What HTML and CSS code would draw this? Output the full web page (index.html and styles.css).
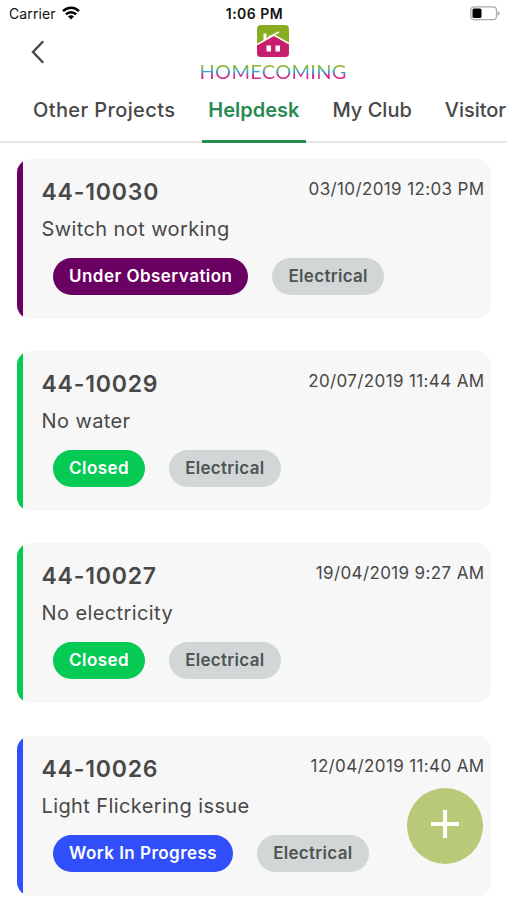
FILE: index.html
```html
<!DOCTYPE html>
<html lang="en">
<head>
<meta charset="utf-8">
<title>Helpdesk</title>
<link rel="stylesheet" href="styles.css">
</head>
<body>
<div class="status">
  <div class="carrier"><span>Carrier</span>
    <svg width="18" height="14" viewBox="0 0 18 14" fill="none" stroke="#000" stroke-width="2.5"><path d="M1 5.2C5.4.6 12.6.6 17 5.2M3.900 8.400c2.900-2.900 7.300-2.900 10.200 0"/><path d="M9 13.500 6 10.600c1.700-1.700 4.300-1.700 6 0z" fill="#000" stroke="none"/></svg>
  </div>
  <div class="clock">1:06 PM</div>
  <svg class="battery" width="30" height="15" viewBox="0 0 30 15"><rect x=".8" y=".8" width="25.7" height="12.9" rx="3.5" fill="#fff" stroke="#aaa" stroke-width="1.3"/><rect x="2.5" y="2.6" width="9" height="9.3" rx="1.5"/><path d="M27.700 5v4.600q2-.7 2-2.300t-2-2.300" fill="#aaa"/></svg>
</div>
<header class="header">
  <svg class="back" width="14" height="24" viewBox="0 0 14 24" fill="none" stroke="#484848" stroke-width="2.4"><path d="M12.200 1.200 2 12l10.200 10.800"/></svg>
  <div class="brand">
    <svg width="32" height="32" viewBox="0 0 32 32"><rect width="32" height="32" rx="4" fill="#88ad20"/><path d="M0 20 17 11l15 8.500V28q0 4-4 4H4q-4 0-4-4z" fill="#c81e70"/><path d="m0 19.500 17-9.500 15 8.500M11 12.500 22 7" fill="none" stroke="#fff" stroke-width="1.500"/><path d="M6.500 8.500h3V14l-3 1.500zM9.500 20.500h4.500v6H9.500zm9 0H23v6h-4.500z" fill="#fff"/></svg>
    <div class="wordmark">HOMECOMING</div>
  </div>
</header>
<nav class="tabs">
  <a class="tab projects">Other Projects</a>
  <a class="tab active">Helpdesk</a>
  <a class="tab">My Club</a>
  <a class="tab visitor">Visitor</a>
</nav>
<main class="list">
  <article class="card observed">
    <div class="top"><h2>44-10030</h2><time>03/10/2019 12:03 PM</time></div>
    <p>Switch not working</p>
    <div class="chips"><span class="chip state">Under Observation</span><span class="chip kind">Electrical</span></div>
  </article>
  <article class="card closed">
    <div class="top"><h2>44-10029</h2><time>20/07/2019 11:44 AM</time></div>
    <p>No water</p>
    <div class="chips"><span class="chip state">Closed</span><span class="chip kind">Electrical</span></div>
  </article>
  <article class="card closed">
    <div class="top"><h2>44-10027</h2><time>19/04/2019 9:27 AM</time></div>
    <p>No electricity</p>
    <div class="chips"><span class="chip state">Closed</span><span class="chip kind">Electrical</span></div>
  </article>
  <article class="card progress">
    <div class="top"><h2>44-10026</h2><time>12/04/2019 11:40 AM</time></div>
    <p>Light Flickering issue</p>
    <div class="chips"><span class="chip state">Work In Progress</span><span class="chip kind">Electrical</span></div>
  </article>
</main>
<button class="add" aria-label="Add"><svg width="28" height="28" viewBox="0 0 28 28"><path d="M14 0v28M0 14h28" stroke="#fff" stroke-width="4"/></svg></button>
</body>
</html>
```
FILE: styles.css
```css
* { box-sizing: border-box; }
body { margin: 0; width: 507px; height: 900px; overflow: hidden; background: #fff; color: #484848; font-family: Inter, "Liberation Sans", sans-serif; }
svg { display: block; flex: none; }
.status { display: grid; grid-template-columns: 1fr auto 1fr; height: 24px; padding: 6px 7px 0 9px; color: #111; font-size: 14px; line-height: 16px; }
.carrier { display: flex; gap: 6px; letter-spacing: .1px; }
.clock { font-weight: 600; letter-spacing: .5px; }
.battery { justify-self: end; }
.header { display: grid; grid-template-columns: 1fr auto 1fr; height: 64px; padding: 1px 0 0; }
.back { margin: 15px 0 0 31px; }
.brand { display: flex; flex-direction: column; align-items: center; width: 148px; margin-left: 38px; }
.wordmark { width: 150px; margin-top: 3px; padding-left: 2px; font: 20px/22px Lato, sans-serif; letter-spacing: .3px; white-space: nowrap; color: transparent; background: linear-gradient(#8fb52a 30%, #55b5a0 45%, #3a9bd8 55%, #d52b86 70%); background-clip: text; }
.tabs { display: flex; gap: 20px; height: 55px; padding-left: 27px; border-bottom: 2px solid #e7e6e3; }
.tab { flex: none; height: 55px; padding: 10px 7px 0 6px; font-size: 20px; line-height: 24px; font-weight: 500; white-space: nowrap; }
.projects { letter-spacing: .38px; }
.visitor { padding-right: 0; letter-spacing: -.05px; }
.tab.active { color: #278a50; font-weight: 600; border-bottom: 3px solid #278a50; }
.list { display: grid; gap: 32.2px; padding: 16px 16px 0 17px; }
.card { height: 160px; padding: 19px 6.5px 0 24.5px; border-radius: 14px; background: linear-gradient(90deg, var(--state) 6px, #f7f7f7 6.5px); }
.observed { --state: #6b0063; }
.closed { --state: #05ca54; }
.progress { --state: #304ffb; }
.top { display: flex; justify-content: space-between; }
h2 { margin: 0; font-size: 23px; line-height: 28px; font-weight: 600; letter-spacing: .8px; }
time { font-size: 17px; line-height: 22px; letter-spacing: .37px; }
p { margin: 10px 0 0; font-size: 20px; line-height: 26px; letter-spacing: .4px; }
.chips { display: flex; gap: 24px; margin: 16px 0 0 11.5px; }
.chip { height: 37px; padding: 0 16px; border-radius: 19px; font-size: 17px; line-height: 36px; font-weight: 600; white-space: nowrap; }
.state { background: var(--state); color: #fff; letter-spacing: .47px; }
.kind { background: #d1d7d7; color: #505353; letter-spacing: .3px; }
.add { position: absolute; left: 407px; top: 788px; display: grid; place-items: center; width: 76px; height: 76px; padding: 0 0 4px; border: 0; border-radius: 50%; background: #b8c978; }
```
